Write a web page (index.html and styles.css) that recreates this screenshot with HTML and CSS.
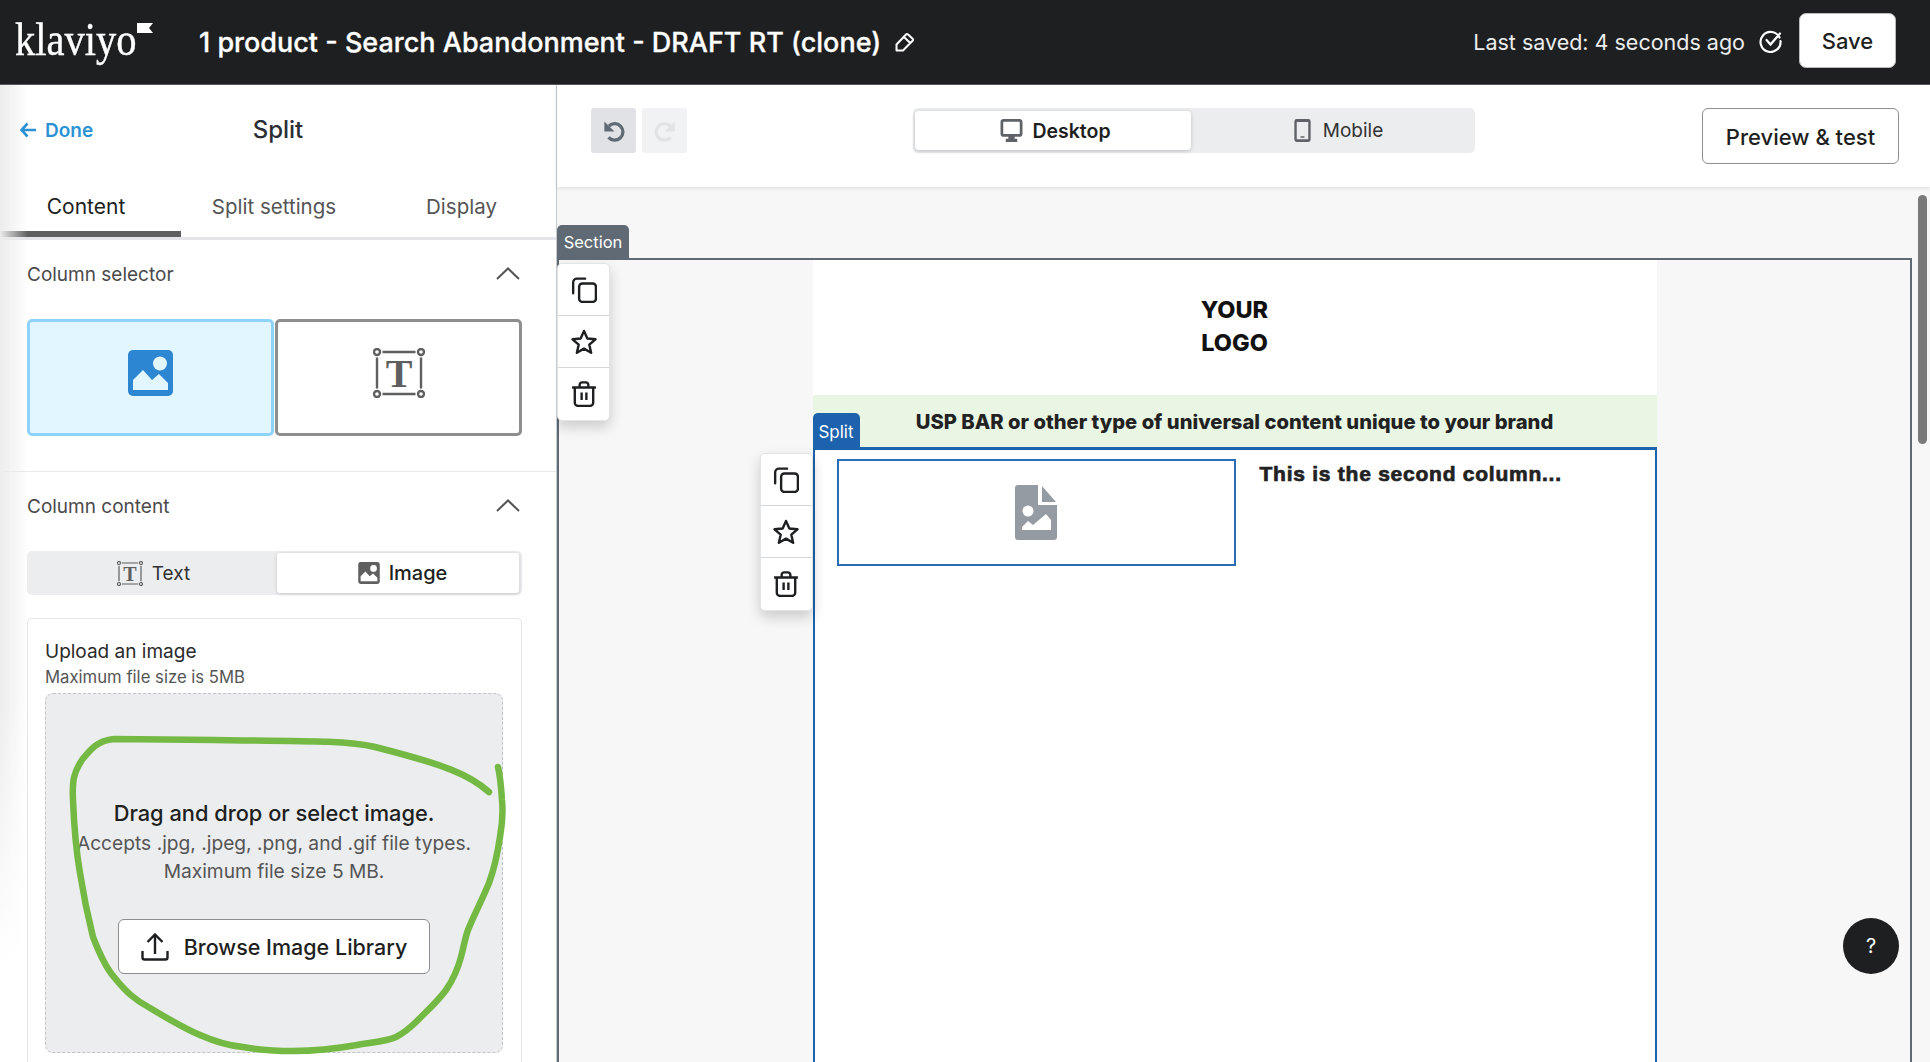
FILE: index.html
```html
<!DOCTYPE html>
<html>
<head>
    <meta charset="UTF-8">
    <meta name="viewport" content="width=device-width, initial-scale=1.0">
    <title>Split - Klaviyo editor</title>
    <link rel="stylesheet" href="styles.css">
</head>
<body>
    <svg class="icon-defs" aria-hidden="true">
        <symbol id="i-copy" viewBox="0 0 24 24">
            <path d="M2 15V5A3.500 3.500 0 0 1 5.500 1.500H13" fill="none" stroke="currentColor" stroke-width="2.200" stroke-linecap="round"/>
            <rect x="7.500" y="6" width="15.500" height="17" rx="3" fill="none" stroke="currentColor" stroke-width="2.200"/>
        </symbol>
        <symbol id="i-star" viewBox="0 0 24 24">
            <path d="M12 1.800l3.100 7 7.500.7-5.700 5 1.700 7.500-6.600-3.900-6.600 3.900 1.700-7.500-5.700-5 7.500-.7z" fill="none" stroke="currentColor" stroke-width="2.200" stroke-linejoin="round"/>
        </symbol>
        <symbol id="i-trash" viewBox="0 0 24 24">
            <path d="M1 6h22M8 6V3.500A2.200 2.200 0 0 1 10.200 1.300h3.600A2.200 2.200 0 0 1 16 3.500V6M3.500 6V20A3 3 0 0 0 6.500 23h11a3 3 0 0 0 3-3V6M9.800 10.500v7M14.200 10.500v7" fill="none" stroke="currentColor" stroke-width="2.200"/>
        </symbol>
        <symbol id="i-picture" viewBox="0 0 45 46">
            <rect width="45" height="46" rx="5" fill="currentColor"/>
            <circle cx="32" cy="13.500" r="7" fill="var(--pic-fg)"/>
            <path d="M5 40V30L15 20l9 10 7-6 9 9v7z" fill="var(--pic-fg)"/>
        </symbol>
        <symbol id="i-frame" viewBox="0 0 52 50">
            <g fill="none" stroke="currentColor" stroke-width="2.400">
                <circle cx="4" cy="4" r="3"/>
                <circle cx="48" cy="4" r="3"/>
                <circle cx="4" cy="46" r="3"/>
                <circle cx="48" cy="46" r="3"/>
                <path d="M9.500 4h33M9.500 46h33M4 9.500v31M48 9.500v31"/>
            </g>
        </symbol>
    </svg>

    <header class="topbar">
        <div class="logo">
            <span class="logo-word">klaviyo</span>
            <svg class="logo-flag" viewBox="0 0 16 10"><path d="M0 0h16l-4 5 4 5H0z" fill="#fff"/></svg>
        </div>
        <h1 class="doc-title">1 product - Search Abandonment - DRAFT RT (clone)</h1>
        <svg class="pencil" viewBox="0 0 20 20"><path d="M1.500 18.500V12.500L11 2.500a1.500 1.500 0 0 1 2.100 0l4.500 4.200a1.500 1.500 0 0 1 0 2.100L8 18.500zM9 5l6 5.800" fill="none" stroke="#fff" stroke-width="2" stroke-linejoin="round"/></svg>
        <div class="save-area">
            <span class="saved-text">Last saved: 4 seconds ago</span>
            <svg class="saved-check" viewBox="0 0 24 24"><path d="M20.500 8.500A10 10 0 1 0 21.500 12M7.500 11l4 4.500 9.500-11" fill="none" stroke="#fff" stroke-width="2.200" stroke-linecap="round"/></svg>
            <button class="save-btn">Save</button>
        </div>
    </header>

    <div class="workspace">
        <aside class="sidebar">
            <div class="side-head">
                <a class="done-link">
                    <svg viewBox="0 0 16 16"><path d="M7.500 1.500L1.500 8l6 6.500M2 8h14" fill="none" stroke="#2c92d6" stroke-width="2.600"/></svg>
                    Done
                </a>
                <span class="side-title">Split</span>
            </div>
            <div class="tabs">
                <span class="tab tab-active">Content</span>
                <span class="tab">Split settings</span>
                <span class="tab">Display</span>
            </div>

            <section class="panel panel-selector">
                <div class="panel-head">
                    <span>Column selector</span>
                    <svg class="chevron" viewBox="0 0 24 13"><path d="M1 12L12 1.500 23 12" fill="none" stroke="#555" stroke-width="2"/></svg>
                </div>
                <div class="col-select">
                    <div class="col-box col-box-active">
                        <svg class="col-pic"><use href="#i-picture"/></svg>
                    </div>
                    <div class="col-box">
                        <svg class="col-text" viewBox="0 0 52 50"><use href="#i-frame"/><text x="26" y="39" text-anchor="middle" class="icon-t">T</text></svg>
                    </div>
                </div>
            </section>

            <section class="panel">
                <div class="panel-head">
                    <span>Column content</span>
                    <svg class="chevron" viewBox="0 0 24 13"><path d="M1 12L12 1.500 23 12" fill="none" stroke="#555" stroke-width="2"/></svg>
                </div>
                <div class="segment">
                    <div class="seg-item seg-text">
                        <svg class="seg-text-icon" viewBox="0 0 52 50"><use href="#i-frame"/><text x="26" y="39" text-anchor="middle" class="icon-t">T</text></svg>
                        <span>Text</span>
                    </div>
                    <div class="seg-item seg-active">
                        <svg class="seg-pic-icon"><use href="#i-picture"/></svg>
                        <span>Image</span>
                    </div>
                </div>
                <div class="upload-card">
                    <div class="upload-title">Upload an image</div>
                    <div class="upload-note">Maximum file size is 5MB</div>
                    <div class="dropzone">
                        <div class="drop-title">Drag and drop or select image.</div>
                        <div class="drop-note">Accepts .jpg, .jpeg, .png, and .gif file types.</div>
                        <div class="drop-note">Maximum file size 5 MB.</div>
                        <button class="browse-btn">
                            <svg viewBox="0 0 28 28"><path d="M1.500 18v6.500a2 2 0 0 0 2 2h21a2 2 0 0 0 2-2V18M14 21V2M6.500 9L14 1.500 21.500 9" fill="none" stroke="#1e1f21" stroke-width="2.400"/></svg>
                            Browse Image Library
                        </button>
                    </div>
                </div>
            </section>

            <svg class="scribble" viewBox="0 0 557 1062">
                <path d="M489 792C470 775 446 765 375 747C350 741 321 741 214 740L114 739C96 741 90 750 82 760C74 772 72 780 73 800C74 825 76 850 80 873C85 905 90 925 93 937C100 955 106 968 114 977C126 992 135 1000 150 1008C170 1020 185 1029 200 1035C218 1043 232 1046 243 1047C260 1050 275 1051 293 1051C320 1051 340 1048 357 1045C375 1042 388 1041 396 1037C404 1033 410 1028 418 1020C428 1010 438 1001 446 990C453 980 458 968 461 957C464 946 465 938 468 930C474 915 482 900 489 883C495 867 498 850 500 837C503 820 503 810 502 800C501 785 500 775 498 767" fill="none" stroke="#74b944" stroke-width="6.500" stroke-linecap="round"/>
            </svg>
        </aside>

        <main class="editor">
            <div class="toolbar">
                <div class="history">
                    <button class="hist-btn hist-on">
                        <svg viewBox="0 0 24 24"><path d="M6.500 6.500A9 9 0 1 1 6 19" fill="none" stroke="currentColor" stroke-width="3.600"/><path d="M1.500 1.500v11h11z" fill="currentColor"/></svg>
                    </button>
                    <button class="hist-btn">
                        <svg viewBox="0 0 24 24"><path d="M17.500 6.500A9 9 0 1 0 18 19" fill="none" stroke="currentColor" stroke-width="3.600"/><path d="M22.500 1.500v11h-11z" fill="currentColor"/></svg>
                    </button>
                </div>
                <div class="device-toggle">
                    <div class="device device-active">
                        <svg viewBox="0 0 21 22"><path d="M3 0h15a3 3 0 0 1 3 3v11a3 3 0 0 1-3 3h-4.500v2h2.500v3H5v-3h2.500v-2H3a3 3 0 0 1-3-3V3a3 3 0 0 1 3-3zm0 2.600a.4.4 0 0 0-.4.4v11c0 .2.200.4.4.4h15a.4.4 0 0 0 .4-.4V3a.4.4 0 0 0-.4-.4z" fill="#5f6368" fill-rule="evenodd"/></svg>
                        Desktop
                    </div>
                    <div class="device device-off">
                        <svg viewBox="0 0 18 24"><path d="M3 0h12a2.500 2.500 0 0 1 2.500 2.500v19A2.500 2.500 0 0 1 15 24H3a2.500 2.500 0 0 1-2.500-2.500v-19A2.500 2.500 0 0 1 3 0zm0 3v18h12V3zm4 15h4v1.500H7z" fill="#5f6368" fill-rule="evenodd"/></svg>
                        Mobile
                    </div>
                </div>
                <button class="preview-btn">Preview &amp; test</button>
            </div>

            <div class="canvas">
                <div class="section-frame">
                    <span class="section-tag">Section</span>
                    <div class="float-tools section-tools">
                        <div class="tool"><svg><use href="#i-copy"/></svg></div>
                        <div class="tool"><svg><use href="#i-star"/></svg></div>
                        <div class="tool"><svg><use href="#i-trash"/></svg></div>
                    </div>

                    <div class="email">
                        <div class="email-logo">YOUR<br>LOGO</div>
                        <div class="usp-bar">USP BAR or other type of universal content unique to your brand</div>
                        <div class="split-frame">
                            <span class="split-tag">Split</span>
                            <div class="float-tools split-tools">
                                <div class="tool"><svg><use href="#i-copy"/></svg></div>
                                <div class="tool"><svg><use href="#i-star"/></svg></div>
                                <div class="tool"><svg><use href="#i-trash"/></svg></div>
                            </div>
                            <div class="img-slot">
                                <svg viewBox="0 0 42 55"><path d="M3 0h20v20h19v32a3 3 0 0 1-3 3H3a3 3 0 0 1-3-3V3a3 3 0 0 1 3-3zM27 1l14 16H27z" fill="#959ba3"/><circle cx="13" cy="26" r="5.500" fill="#fff"/><path d="M7 45v-3l6-6 5 4 13-11 5 6v10z" fill="#fff"/></svg>
                            </div>
                            <div class="second-col">This is the second column...</div>
                        </div>
                    </div>
                </div>
                <div class="scroll-thumb"></div>
                <button class="help-btn">?</button>
            </div>
        </main>
    </div>
</body>
</html>
```

FILE: styles.css
```css
* {
    box-sizing: border-box;
}
html, body {
    height: 100%;
}
body {
    margin: 0;
    overflow: hidden;
    display: flex;
    flex-direction: column;
    font-family: Inter, "Liberation Sans", sans-serif;
    color: #1e1f21;
    background-color: #fff;
}
button {
    font-family: inherit;
    cursor: pointer;
}
.icon-defs {
    position: absolute;
    width: 0;
    height: 0;
}
.icon-t {
    font-family: "Liberation Serif", serif;
    font-weight: 700;
    font-size: 40px;
    fill: currentColor;
}

/* top bar */
.topbar {
    flex: none;
    height: 85px;
    display: flex;
    align-items: center;
    background-color: #1e1f21;
    border-bottom: 1px solid #55585c;
    color: #fff;
}
.logo {
    width: 184px;
    margin: 0 0 5px 15px;
    display: flex;
    align-items: flex-start;
}
.logo-word {
    width: 122px;
    font-family: "Liberation Serif", serif;
    font-size: 46px;
    line-height: 50px;
    white-space: nowrap;
    transform: scaleX(0.88);
    transform-origin: left;
    -webkit-text-stroke: 0.4px #fff;
}
.logo-flag {
    width: 16px;
    height: 10px;
    margin-top: 8px;
}
.doc-title {
    margin: 0;
    font-size: 27px;
    font-weight: 500;
    white-space: nowrap;
    -webkit-text-stroke: 0.3px #fff;
}
.pencil {
    width: 20px;
    height: 20px;
    margin-left: 14px;
}
.save-area {
    margin-left: auto;
    padding-right: 34px;
    display: flex;
    align-items: center;
}
.saved-text {
    font-size: 21.500px;
    color: #eceded;
}
.saved-check {
    width: 24px;
    height: 24px;
    margin: 0 16px 3px 14px;
}
.save-btn {
    width: 97px;
    height: 55px;
    margin-bottom: 3px;
    border: 1px solid #bbb;
    border-radius: 7px;
    background-color: #fff;
    font-size: 22px;
    font-weight: 500;
    color: #1e1f21;
}

/* layout */
.workspace {
    flex: 1;
    min-height: 0;
    display: flex;
}
.sidebar {
    position: relative;
    flex: none;
    width: 557px;
    overflow: hidden;
    border-right: 1px solid #c6cbd0;
    background-color: #fff;
}
.sidebar::before {
    content: "";
    position: absolute;
    left: 0;
    top: 0;
    width: 28px;
    height: 880px;
    background: linear-gradient(to right, #ececec, rgba(255, 255, 255, 0));
    -webkit-mask-image: linear-gradient(to bottom, #000 70%, transparent);
    mask-image: linear-gradient(to bottom, #000 70%, transparent);
    pointer-events: none;
}
.scribble {
    position: absolute;
    left: 0;
    top: -85px;
    width: 557px;
    height: 1062px;
    pointer-events: none;
}

/* sidebar head and tabs */
.side-head {
    position: relative;
    height: 90px;
    display: flex;
    align-items: center;
    justify-content: center;
}
.done-link {
    position: absolute;
    left: 20px;
    display: flex;
    align-items: center;
    gap: 9px;
    font-size: 19px;
    font-weight: 600;
    color: #2c92d6;
}
.done-link svg {
    width: 16px;
    height: 16px;
}
.side-title {
    padding-bottom: 2px;
    font-size: 24px;
    font-weight: 500;
    color: #2a2f36;
}
.tabs {
    height: 65px;
    display: grid;
    grid-template-columns: 181px 186px 1fr;
    border-bottom: 3px solid #e3e5e8;
}
.tab {
    display: flex;
    align-items: center;
    justify-content: center;
    font-size: 20.500px;
    color: #555;
}
.tab-active {
    color: #1e1f21;
    font-size: 21px;
    border-bottom: 6px solid #5f5f5f;
    padding: 6px 9px 0 0;
}

/* panels */
.panel {
    padding: 0 34px 0 27px;
}
.panel-selector {
    padding-bottom: 35px;
    border-bottom: 1px solid #e8e9eb;
}
.panel-head {
    height: 68px;
    display: flex;
    align-items: center;
    justify-content: space-between;
    margin-bottom: 11px;
    font-size: 19px;
    color: #4a4a4a;
}
.chevron {
    width: 24px;
    height: 13px;
    margin: 0 2px 2px 0;
}
.col-select {
    display: grid;
    grid-template-columns: 247px 1fr;
    gap: 1px;
    height: 117px;
}
.col-box {
    display: flex;
    align-items: center;
    justify-content: center;
    padding-bottom: 10px;
    border: 3px solid #8e8e8e;
    border-radius: 5px;
    color: #5f5f5f;
}
.col-box-active {
    border-color: #8fd3fb;
    background-color: #e1f6fe;
    color: #2d86d1;
    --pic-fg: #e1f6fe;
}
.col-pic {
    width: 45px;
    height: 46px;
}
.col-text {
    width: 52px;
    height: 50px;
}

/* text / image switch */
.segment {
    height: 44px;
    padding: 2px 3px 2px 0;
    display: grid;
    grid-template-columns: 250px 1fr;
    border-radius: 5px;
    background-color: #ecedef;
    font-size: 20px;
}
.seg-item {
    display: flex;
    align-items: center;
    justify-content: center;
    gap: 9px;
    color: #333;
}
.seg-text {
    padding-left: 3px;
    font-size: 19px;
}
.seg-active {
    padding-left: 9px;
    background-color: #fff;
    border-radius: 3px;
    box-shadow: 0 1px 4px rgba(0, 0, 0, 0.16);
    font-weight: 500;
    color: #1e1f21;
    --pic-fg: #fff;
}
.seg-text-icon {
    width: 26px;
    height: 25px;
    color: #5f5f5f;
}
.seg-pic-icon {
    width: 22px;
    height: 22px;
    color: #5f5f5f;
}

/* upload */
.upload-card {
    margin-top: 23px;
    height: 444px;
    padding: 21px 18px 0 17px;
    border: 1px solid #e3e5e8;
    border-bottom: none;
    border-radius: 5px 5px 0 0;
}
.upload-title {
    font-size: 19px;
    line-height: 24px;
    color: #2a2a2a;
}
.upload-note {
    margin-top: 3px;
    font-size: 16.700px;
    line-height: 20px;
    color: #555;
}
.dropzone {
    margin-top: 6px;
    height: 360px;
    padding-top: 104px;
    display: flex;
    flex-direction: column;
    align-items: center;
    border: 1px dashed #c0c4c9;
    border-radius: 8px;
    background-color: #ecedef;
    text-align: center;
}
.drop-title {
    font-size: 21.800px;
    font-weight: 500;
    line-height: 30px;
    margin-bottom: 1px;
    white-space: nowrap;
}
.drop-note {
    font-size: 19.200px;
    line-height: 28px;
    color: #555;
    white-space: nowrap;
}
.browse-btn {
    margin-top: 34px;
    width: 312px;
    height: 55px;
    display: flex;
    align-items: center;
    justify-content: center;
    gap: 15px;
    border: 1px solid #8e8e8e;
    border-radius: 6px;
    background-color: #fff;
    font-size: 21.500px;
    font-weight: 500;
    color: #1e1f21;
}
.browse-btn svg {
    width: 28px;
    height: 28px;
}

/* editor toolbar */
.editor {
    flex: 1;
    min-width: 0;
    display: flex;
    flex-direction: column;
}
.toolbar {
    position: relative;
    z-index: 2;
    flex: none;
    height: 102px;
    padding: 23px 31px 0 34px;
    display: flex;
    align-items: flex-start;
    background-color: #fff;
    box-shadow: 0 1px 4px rgba(0, 0, 0, 0.12);
}
.history {
    display: flex;
    gap: 6px;
}
.hist-btn {
    width: 45px;
    height: 45px;
    padding: 0;
    display: flex;
    align-items: center;
    justify-content: center;
    border: none;
    border-radius: 3px;
    background-color: #f1f2f3;
    color: #e1e3e5;
}
.hist-btn svg {
    width: 22px;
    height: 22px;
}
.hist-on {
    background-color: #e0e2e5;
    color: #5f6a74;
}
.device-toggle {
    margin-left: 226px;
    width: 562px;
    height: 45px;
    padding: 3px 0 3px 2px;
    display: grid;
    grid-template-columns: 276px 1fr;
    border-radius: 5px;
    background-color: #ecedef;
}
.device {
    display: flex;
    align-items: center;
    justify-content: center;
    gap: 9px;
    font-size: 19.500px;
    color: #333;
}
.device svg {
    height: 23px;
    width: 23px;
}
.device-active {
    padding-left: 5px;
    background-color: #fff;
    border-radius: 4px;
    box-shadow: 0 1px 4px rgba(0, 0, 0, 0.2);
    font-weight: 600;
    color: #1e1f21;
}
.device-off {
    padding-left: 8px;
    font-size: 19px;
}
.preview-btn {
    margin-left: auto;
    width: 197px;
    height: 56px;
    padding-top: 3px;
    border: 1px solid #8e8e8e;
    border-radius: 6px;
    background-color: #fff;
    font-size: 22px;
    font-weight: 500;
    color: #1e1f21;
}

/* canvas */
.canvas {
    position: relative;
    flex: 1;
    min-height: 0;
    padding: 71px 18px 0 0;
    overflow: hidden;
    background-color: #f7f7f7;
}
.scroll-thumb {
    position: absolute;
    top: 8px;
    right: 3px;
    width: 9px;
    height: 249px;
    border-radius: 5px;
    background-color: #7a7a7a;
}
.help-btn {
    position: absolute;
    right: 31px;
    top: 731px;
    width: 56px;
    height: 56px;
    border: none;
    border-radius: 50%;
    background-color: #1e1f21;
    color: #fff;
    font-size: 20px;
}
.section-frame {
    position: relative;
    height: 804px;
    border: 2px solid #5f6a74;
    border-bottom: none;
}
.section-tag {
    position: absolute;
    left: -2px;
    bottom: 100%;
    width: 72px;
    height: 35px;
    padding-bottom: 2px;
    display: flex;
    align-items: center;
    justify-content: center;
    border-radius: 5px 5px 0 0;
    background-color: #5f6a74;
    color: #fff;
    font-size: 16.500px;
}
.float-tools {
    position: absolute;
    z-index: 1;
    width: 53px;
    background-color: #fff;
    border: 1px solid #e2e4e6;
    border-radius: 5px;
    box-shadow: 0 6px 14px rgba(0, 0, 0, 0.18);
}
.section-tools {
    left: -2px;
    top: 3px;
}
.split-tools {
    left: -55px;
    top: 3px;
}
.tool {
    height: 52px;
    display: flex;
    align-items: center;
    justify-content: center;
    border-bottom: 1px solid #d4d7da;
    color: #1e1f21;
}
.tool:last-child {
    border-bottom: none;
}
.tool svg {
    width: 26px;
    height: 26px;
}

/* email preview */
.email {
    width: 844px;
    margin: 0 auto;
    background-color: #fff;
}
.email-logo {
    height: 135px;
    padding-top: 33px;
    text-align: center;
    font-size: 23.500px;
    font-weight: 800;
    line-height: 33px;
    color: #111;
}
.usp-bar {
    height: 52px;
    padding-top: 9px;
    text-align: center;
    background-color: #e9f6e4;
    font-size: 20.200px;
    font-weight: 800;
    line-height: 36px;
    white-space: nowrap;
    color: #222;
}
.split-frame {
    position: relative;
    height: 615px;
    padding: 9px 2px 0 22px;
    display: flex;
    align-items: flex-start;
    gap: 24px;
    border: solid #1c62ad;
    border-width: 3px 2px 0;
}
.split-tag {
    position: absolute;
    left: -2px;
    top: -37px;
    width: 47px;
    height: 34px;
    padding-top: 4px;
    display: flex;
    align-items: center;
    justify-content: center;
    border-radius: 5px 5px 0 0;
    background-color: #1c62ad;
    color: #fff;
    font-size: 17px;
}
.img-slot {
    flex: none;
    width: 399px;
    height: 107px;
    display: flex;
    align-items: center;
    justify-content: center;
    border: 2px solid #2a6db5;
}
.img-slot svg {
    width: 42px;
    height: 55px;
}
.second-col {
    margin-top: 1px;
    font-family: "Liberation Sans", Arial, sans-serif;
    font-size: 21px;
    font-weight: 700;
    letter-spacing: 0.75px;
    -webkit-text-stroke: 0.7px #222;
    line-height: 28px;
    color: #222;
}
```
